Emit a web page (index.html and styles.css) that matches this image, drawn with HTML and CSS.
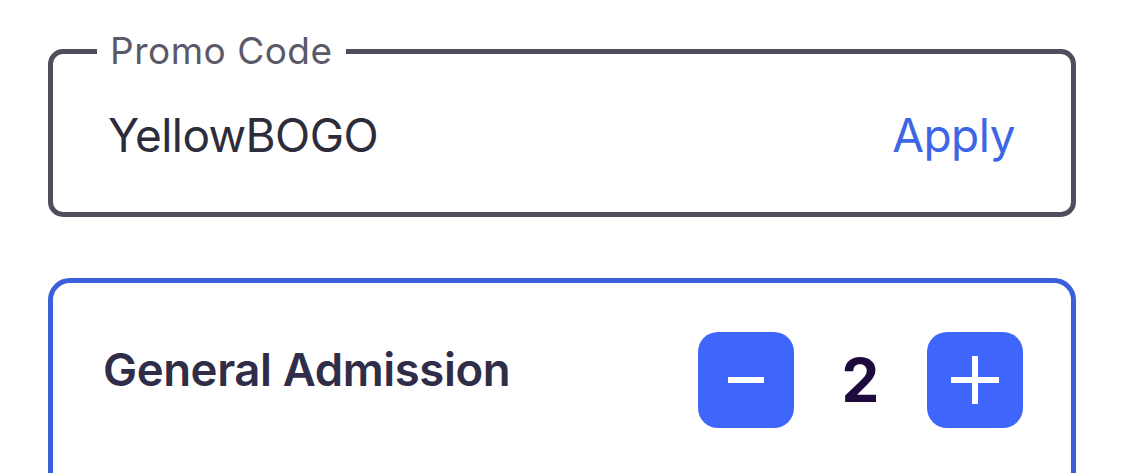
FILE: index.html
```html
<!DOCTYPE html>
<html lang="en">
<head>
<meta charset="utf-8">
<title>Promo Code</title>
<link rel="stylesheet" href="styles.css">
</head>
<body>
<main class="page">
  <fieldset class="promo">
    <legend class="promo-label">Promo Code</legend>
    <div class="promo-row">
      <span class="promo-value">YellowBOGO</span>
      <button class="apply" type="button">Apply</button>
    </div>
  </fieldset>

  <section class="ticket">
    <h2 class="ticket-name">General Admission</h2>
    <div class="stepper">
      <button class="step" type="button" aria-label="Decrease">
        <svg width="36" height="6" viewBox="0 0 36 6"><rect x="0" y="0" width="36" height="6" fill="#fff"/></svg>
      </button>
      <span class="qty">2</span>
      <button class="step" type="button" aria-label="Increase">
        <svg width="48" height="48" viewBox="0 0 48 48"><rect x="0" y="21" width="48" height="6" fill="#fff"/><rect x="21" y="0" width="6" height="48" fill="#fff"/></svg>
      </button>
    </div>
  </section>
</main>
</body>
</html>
```
FILE: styles.css
```css
html, body {
  margin: 0;
  padding: 0;
  background: #ffffff;
  overflow: hidden;
}

.page {
  padding: 0 49px 0 48px;
  font-family: Inter, "Noto Sans", sans-serif;
}

.promo {
  margin: 0;
  margin-top: 33px;
  border: 5px solid #4f4e5d;
  border-radius: 15px;
  padding: 0 56px 0 44px;
  height: 184px;
  box-sizing: border-box;
}

.promo-label {
  padding: 0 13px;
  font-size: 37px;
  line-height: 36px;
  color: #5a5967;
  font-weight: 400;
  letter-spacing: 0.5px;
}

.promo-row {
  display: flex;
  justify-content: space-between;
  align-items: center;
  padding: 38px 0 0 11px;
}

.promo-value {
  font-size: 46px;
  line-height: 56px;
  color: #2d2c3b;
  letter-spacing: -0.6px;
}

.apply {
  border: 0;
  background: none;
  padding: 0;
  font-family: inherit;
  font-size: 46px;
  line-height: 56px;
  color: #3d66e6;
  letter-spacing: -0.5px;
}

.ticket {
  margin-top: 61px;
  border: 5px solid #3b5fdc;
  border-radius: 22px;
  height: 300px;
  display: flex;
  justify-content: space-between;
  align-items: flex-start;
  padding: 49px 48px 0 50px;
}

.ticket-name {
  margin: 0;
  margin-top: 10px;
  font-size: 45.5px;
  line-height: 56px;
  font-weight: 600;
  color: #2f2d47;
  letter-spacing: -0.4px;
}

.stepper {
  display: flex;
  align-items: center;
}

.step {
  width: 96px;
  height: 96px;
  border: 0;
  border-radius: 20px;
  background: #3f66fa;
  display: flex;
  align-items: center;
  justify-content: center;
  padding: 0;
}

.qty {
  width: 133px;
  text-align: center;
  font-size: 60px;
  font-weight: 700;
  color: #1e0a3c;
  line-height: 96px;
}
```
